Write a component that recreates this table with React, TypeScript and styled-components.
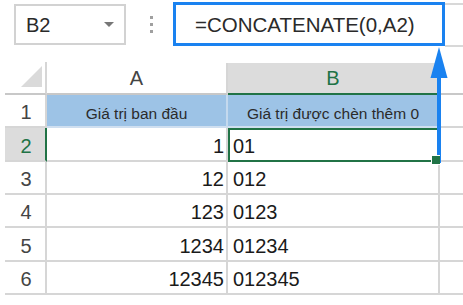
import styled, { createGlobalStyle } from 'styled-components';

const GlobalStyle = createGlobalStyle`
  html, body {
    margin: 0;
    padding: 0;
    background: #fff;
  }
  body {
    font-family: 'Liberation Sans', Arial, sans-serif;
  }
`;

const GREEN = '#217346';
const BLUE = '#1a82f0';
const GRID = '#d6d6d6';

const values = [1, 12, 123, 1234, 12345];

const App = () => {
  return (
    <Page>
      <GlobalStyle />
      <Toolbar>
        <NameBox>
          <span>B2</span>
          <Caret />
        </NameBox>
        <Dots>
          <i />
          <i />
          <i />
        </Dots>
        <FormulaArea>
          <FormulaBox>=CONCATENATE(0,A2)</FormulaBox>
          <FormulaTail />
        </FormulaArea>
      </Toolbar>

      <Sheet>
        <Corner>
          <SelectAll />
        </Corner>
        <ColHeader>A</ColHeader>
        <ColHeader $active>B</ColHeader>
        <ColHeader $last />

        <RowHead>1</RowHead>
        <Cell $title $align="center">Giá trị ban đầu</Cell>
        <Cell $title $align="center">Giá trị được chèn thêm 0</Cell>
        <Cell $last />

        {values.map((v, i) => {
          const active = i === 0;
          return [
            <RowHead key={`h${v}`} $active={active}>
              {i + 2}
            </RowHead>,
            <Cell key={`a${v}`} $align="right">
              {v}
            </Cell>,
            <Cell key={`b${v}`} $selected={active}>
              {'0' + v}
              {active && <FillHandle />}
            </Cell>,
            <Cell key={`c${v}`} $last />,
          ];
        })}
      </Sheet>

      {/* arrow from the active cell up to the formula bar */}
      <Arrow width="22" height="122" viewBox="0 0 22 122">
        <rect x="9" y="28" width="4" height="91" fill={BLUE} />
        <polygon points="11,3 2.5,34 19.5,34" fill={BLUE} />
      </Arrow>
    </Page>
  );
};

export default App;

const Page = styled.div`
  position: relative;
  width: 463px;
  height: 305px;
  overflow: hidden;
  background: #fff;
`;

const Toolbar = styled.div`
  display: flex;
  align-items: flex-start;
  height: 50px;
`;

const NameBox = styled.div`
  box-sizing: border-box;
  display: flex;
  align-items: center;
  justify-content: space-between;
  width: 112px;
  height: 41px;
  margin: 4px 0 0 14px;
  padding: 2px 10px 0 10px;
  border: 2px solid #d2d2d2;
  font-size: 20px;
  color: #2a2a2a;
`;

const Caret = styled.div`
  width: 0;
  height: 0;
  border-left: 5px solid transparent;
  border-right: 5px solid transparent;
  border-top: 5px solid #777;
  margin-bottom: 3px;
`;

const Dots = styled.div`
  display: flex;
  flex-direction: column;
  gap: 4px;
  margin: 16px 0 0 24px;

  i {
    display: block;
    width: 3px;
    height: 3px;
    background: #a0a0a0;
  }
`;

const FormulaArea = styled.div`
  display: flex;
  flex: 1;
  margin: 2px 0 0 20px;
`;

const FormulaBox = styled.div`
  box-sizing: border-box;
  display: flex;
  align-items: center;
  width: 272px;
  height: 44px;
  padding: 3px 0 0 19px;
  border: 3px solid ${BLUE};
  font-size: 20.5px;
  line-height: 1;
  color: #2a2a2a;
  white-space: nowrap;
`;

const FormulaTail = styled.div`
  flex: 1;
  height: 40px;
  margin-top: 1px;
  border-top: 2px solid #d8d8d8;
  border-bottom: 2px solid #d8d8d8;
`;

const Sheet = styled.div`
  display: grid;
  grid-template-columns: 42px 181px 212px 23px;
  grid-template-rows: 33px 33px 34px 33px 33px 34px 33px;
  margin: 12px 0 0 5px;
  color: #222;
`;

const Corner = styled.div`
  box-sizing: border-box;
  display: flex;
  align-items: flex-end;
  justify-content: flex-end;
  padding: 0 3px 6px 0;
  border-right: 2px solid ${GRID};
  border-bottom: 2px solid #c8c8c8;
`;

const SelectAll = styled.div`
  width: 0;
  height: 0;
  border-left: 21px solid transparent;
  border-bottom: 21px solid #dadada;
`;

const ColHeader = styled.div<{ $active?: boolean; $last?: boolean }>`
  box-sizing: border-box;
  display: flex;
  align-items: flex-end;
  justify-content: center;
  padding-bottom: 5px;
  margin-top: 1px;
  font-size: 20px;
  line-height: 1;
  color: ${(p) => (p.$active ? GREEN : '#444')};
  background: ${(p) => (p.$active ? '#dcdcdc' : '#fff')};
  border-right: ${(p) => (p.$last ? 'none' : `2px solid ${GRID}`)};
  border-bottom: 2px solid ${(p) => (p.$active ? GREEN : '#c8c8c8')};
`;

const RowHead = styled.div<{ $active?: boolean }>`
  box-sizing: border-box;
  display: flex;
  align-items: flex-end;
  justify-content: center;
  padding: 0 0 4px 2px;
  font-size: 20px;
  line-height: 1;
  color: ${(p) => (p.$active ? GREEN : '#444')};
  background: ${(p) => (p.$active ? '#dcdcdc' : '#fff')};
  border-right: 2px solid ${(p) => (p.$active ? GREEN : GRID)};
  border-bottom: 2px solid ${GRID};
`;

const Cell = styled.div<{
  $align?: 'left' | 'right' | 'center';
  $title?: boolean;
  $selected?: boolean;
  $last?: boolean;
}>`
  position: relative;
  box-sizing: border-box;
  display: flex;
  align-items: flex-end;
  justify-content: ${(p) =>
    p.$align === 'right' ? 'flex-end' : p.$align === 'center' ? 'center' : 'flex-start'};
  padding: ${(p) => (p.$align === 'right' ? '0 2px 4px 0' : p.$title ? '0 0 5px 0' : '0 0 4px 5px')};
  font-size: ${(p) => (p.$title ? '15.5px' : '20px')};
  line-height: 1;
  color: ${(p) => (p.$title ? '#2b2b2b' : '#1a1a1a')};
  white-space: nowrap;
  background: ${(p) => (p.$title ? '#9dc3e6' : '#fff')};
  border-right: ${(p) => (p.$last ? 'none' : `2px solid ${p.$title ? '#c4d9ee' : GRID}`)};
  border-bottom: 2px solid ${(p) => (p.$title ? '#cfdff0' : GRID)};
  outline: ${(p) => (p.$selected ? `2px solid ${GREEN}` : 'none')};
  outline-offset: -2px;
`;

const FillHandle = styled.span`
  position: absolute;
  right: -2px;
  bottom: -5px;
  z-index: 2;
  width: 8px;
  height: 8px;
  background: ${GREEN};
  border: 1px solid #fff;
  border-right: none;
`;

const Arrow = styled.svg`
  position: absolute;
  left: 428px;
  top: 44px;
  z-index: 1;
  pointer-events: none;
`;
